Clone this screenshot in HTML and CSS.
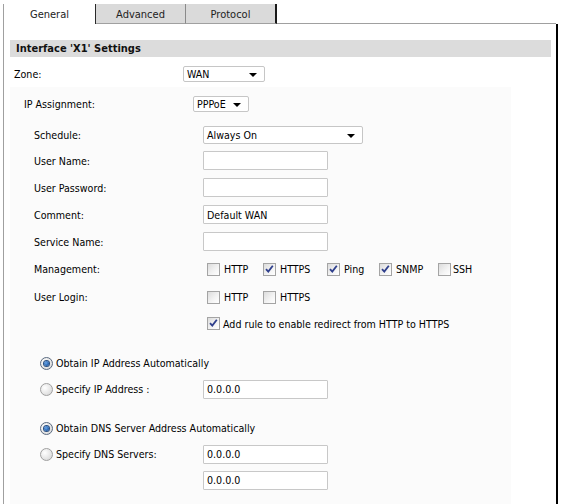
FILE: index.html
```html
<!DOCTYPE html>
<html>
<head>
<meta charset="utf-8">
<link rel="stylesheet" href="styles.css">
</head>
<body>
<div class="frame">
  <div class="tabs">
    <div class="tab active">General</div>
    <div class="tab mid">Advanced</div>
    <div class="tab last">Protocol</div>
    <div class="tab-fill"></div>
  </div>
  <div class="panel">
    <div class="section-head">Interface 'X1' Settings</div>
    <div class="row zone-row">
      <div class="label">Zone:</div>
      <div class="select w-wan"><span>WAN</span><i class="arrow"></i></div>
    </div>
    <div class="sub">
      <div class="row ip-row">
        <div class="label">IP Assignment:</div>
        <div class="select w-pppoe"><span>PPPoE</span><i class="arrow"></i></div>
      </div>
      <div class="inner">
        <div class="row sched-row">
          <div class="label">Schedule:</div>
          <div class="select w-sched"><span>Always On</span><i class="arrow"></i></div>
        </div>
        <div class="row frow">
          <div class="label">User Name:</div>
          <div class="input"></div>
        </div>
        <div class="row frow">
          <div class="label">User Password:</div>
          <div class="input"></div>
        </div>
        <div class="row frow">
          <div class="label">Comment:</div>
          <div class="input">Default WAN</div>
        </div>
        <div class="row frow">
          <div class="label">Service Name:</div>
          <div class="input"></div>
        </div>
        <div class="row crow">
          <div class="label">Management:</div>
          <div class="checks">
            <span class="chk-item w-http"><span class="cb"></span>HTTP</span>
            <span class="chk-item w-https"><span class="cb on"><svg viewBox="0 0 13 13"><path d="M3 6.2 L5.3 8.6 L9.8 2.8" /></svg></span>HTTPS</span>
            <span class="chk-item w-ping"><span class="cb on"><svg viewBox="0 0 13 13"><path d="M3 6.2 L5.3 8.6 L9.8 2.8" /></svg></span>Ping</span>
            <span class="chk-item w-snmp"><span class="cb on"><svg viewBox="0 0 13 13"><path d="M3 6.2 L5.3 8.6 L9.8 2.8" /></svg></span>SNMP</span>
            <span class="chk-item close"><span class="cb"></span>SSH</span>
          </div>
        </div>
        <div class="row crow">
          <div class="label">User Login:</div>
          <div class="checks">
            <span class="chk-item w-http"><span class="cb"></span>HTTP</span>
            <span class="chk-item"><span class="cb"></span>HTTPS</span>
          </div>
        </div>
        <div class="row addrow">
          <div class="label"></div>
          <div class="checks">
            <span class="chk-item tight"><span class="cb on"><svg viewBox="0 0 13 13"><path d="M3 6.2 L5.3 8.6 L9.8 2.8" /></svg></span>Add rule to enable redirect from HTTP to HTTPS</span>
          </div>
        </div>
      </div>
      <div class="radios">
        <div class="row rrow first">
          <div class="rlabel"><span class="rb on"><i></i></span>Obtain IP Address Automatically</div>
        </div>
        <div class="row rrow">
          <div class="rlabel"><span class="rb"></span>Specify IP Address :</div>
          <div class="input">0.0.0.0</div>
        </div>
        <div class="row rrow gap">
          <div class="rlabel"><span class="rb on"><i></i></span>Obtain DNS Server Address Automatically</div>
        </div>
        <div class="row rrow">
          <div class="rlabel"><span class="rb"></span>Specify DNS Servers:</div>
          <div class="input">0.0.0.0</div>
        </div>
        <div class="row rrow">
          <div class="rlabel"></div>
          <div class="input">0.0.0.0</div>
        </div>
      </div>
    </div>
  </div>
</div>
</body>
</html>
```

FILE: styles.css
```css
html, body {
  margin: 0;
  padding: 0;
  background: #ffffff;
}
body {
  font-family: "DejaVu Sans Condensed", "Liberation Sans", sans-serif;
  font-size: 10.6px;
  color: #000;
  width: 564px;
  height: 504px;
  overflow: hidden;
}
.frame {
  margin-left: 3px;
  padding-top: 4px;
  width: 555px;
  height: 500px;
  display: flex;
  flex-direction: column;
}
.tabs {
  display: flex;
  height: 20px;
  flex: none;
}
.tab {
  box-sizing: border-box;
  height: 20px;
  display: flex;
  align-items: center;
  justify-content: center;
  font-size: 11px;
  color: #222;
  padding-top: 1px;
}
.tab.active {
  width: 93px;
  background: #fff;
  border-left: 1px solid #a0a0a0;
  border-right: 1px solid #2a2a2a;
}
.tab.mid {
  width: 90px;
  background: #dadada;
  border-bottom: 1px solid #a0a0a0;
  border-right: 1px solid #8a8a8a;
}
.tab.last {
  width: 91px;
  background: #dadada;
  border-bottom: 1px solid #a0a0a0;
  border-right: 2px solid #1a1a1a;
}
.tab-fill {
  flex: 1;
  border-bottom: 1px solid #a0a0a0;
  margin-right: 2px;
}
.panel {
  flex: 1;
  border-left: 1px solid #a0a0a0;
  border-right: 2px solid #000;
  padding: 16px 5px 0 6px;
  display: flex;
  flex-direction: column;
}
.section-head {
  height: 17px;
  background: #dcdcdc;
  font-weight: bold;
  font-size: 11px;
  display: flex;
  align-items: center;
  padding-left: 6px;
  color: #111;
}
.row {
  display: flex;
  align-items: center;
}
.label {
  width: 169px;
  flex: none;
}
.zone-row {
  height: 24px;
  margin-top: 5px;
  padding-left: 4px;
}
.sub {
  flex: 1;
  width: 501px;
  margin-top: 1px;
  background: #fbfbfb;
}
.ip-row {
  height: 24px;
  margin-top: 5px;
  padding-left: 14px;
}
.inner {
  padding-left: 24px;
}
.sched-row {
  height: 24px;
  margin-top: 7px;
}
.frow {
  height: 27px;
}
.crow {
  height: 28px;
}
.addrow {
  height: 25px;
}
.select {
  box-sizing: border-box;
  height: 16px;
  border: 1px solid #c6c6c6;
  border-radius: 2px;
  background: #fff;
  display: flex;
  align-items: center;
  justify-content: space-between;
  padding: 0 7px 0 3px;
}
.w-wan { width: 82px; }
.w-pppoe { width: 56px; }
.w-sched { width: 160px; height: 18px; }
.arrow {
  width: 0;
  height: 0;
  border-left: 4px solid transparent;
  border-right: 4px solid transparent;
  border-top: 4px solid #000;
  margin-top: 2px;
}
.input {
  box-sizing: border-box;
  width: 125px;
  height: 19px;
  border: 1px solid #c8c8c8;
  border-radius: 1px;
  background: #fff;
  display: flex;
  align-items: center;
  padding-left: 3px;
}
.checks {
  display: flex;
  align-items: center;
  padding-left: 4px;
}
.chk-item {
  display: flex;
  align-items: center;
  gap: 4px;
  white-space: nowrap;
}
.chk-item.tight { gap: 3px; }
.chk-item.close { gap: 2px; }
.w-http { width: 56px; }
.w-https { width: 64px; }
.w-ping { width: 52px; }
.w-snmp { width: 59px; }
.cb {
  box-sizing: border-box;
  width: 13px;
  height: 13px;
  border: 1px solid #a4a4a4;
  background: linear-gradient(135deg, #dcdcdc 0%, #f4f4f4 60%, #ffffff 100%);
  display: inline-block;
  position: relative;
  flex: none;
}
.cb svg {
  position: absolute;
  left: -1px;
  top: -1px;
  width: 13px;
  height: 13px;
}
.cb svg path {
  fill: none;
  stroke: #2f3f8c;
  stroke-width: 1.8;
}
.radios {
  padding-left: 30px;
}
.rrow {
  height: 26px;
}
.rrow.first {
  margin-top: 14px;
}
.rrow.gap {
  margin-top: 13px;
}
.rlabel {
  min-width: 163px;
  flex: none;
  display: flex;
  align-items: center;
  gap: 3px;
  white-space: nowrap;
}
.rb {
  box-sizing: border-box;
  width: 13px;
  height: 13px;
  border-radius: 50%;
  border: 1px solid #a0a0a0;
  background: radial-gradient(circle at 35% 35%, #ffffff 0%, #e4e4e4 60%, #cfcfcf 100%);
  display: inline-flex;
  align-items: center;
  justify-content: center;
  flex: none;
}
.rb.on {
  border-color: #5a6a80;
}
.rb i {
  width: 5px;
  height: 5px;
  border-radius: 50%;
  background: radial-gradient(circle at 40% 40%, #6aa6e8 0%, #1c5aa8 70%, #0e3a78 100%);
  box-shadow: 0 0 0 1px #2a4f80;
}
```
